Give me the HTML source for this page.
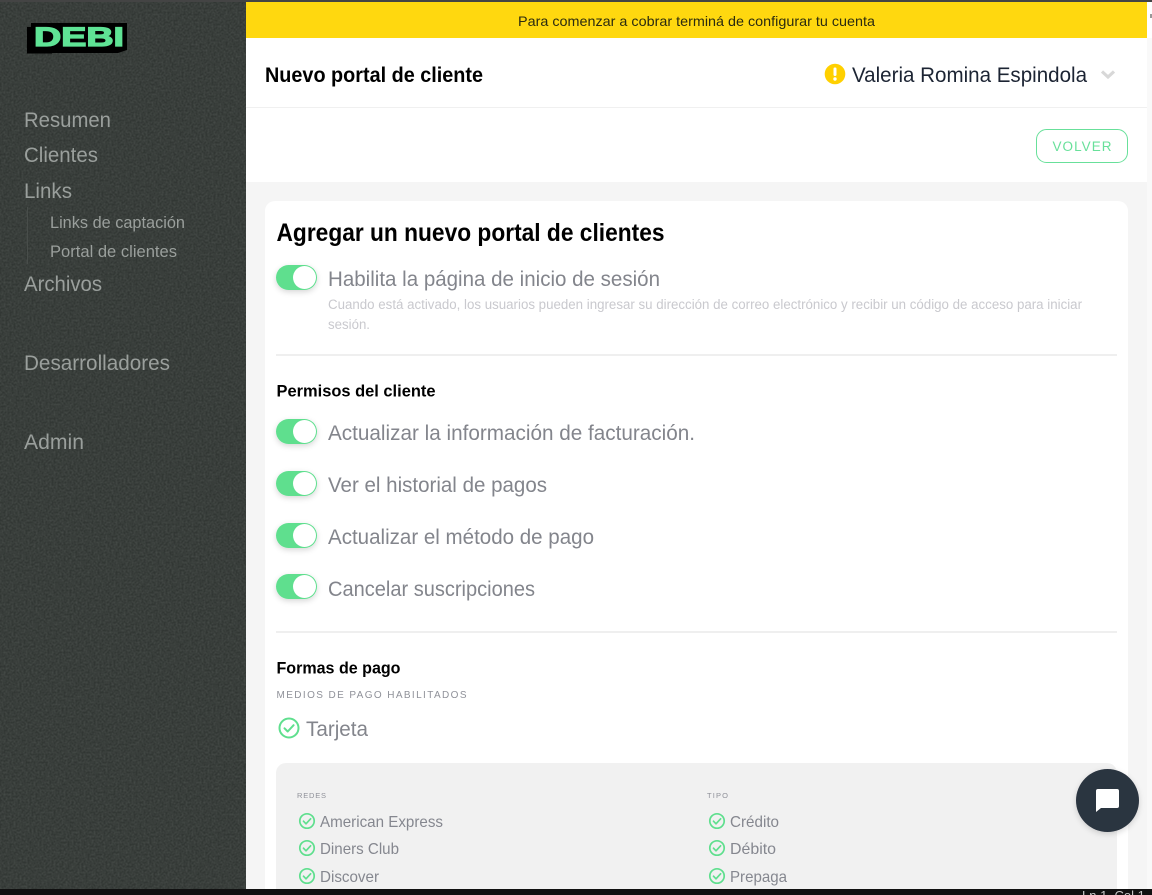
<!DOCTYPE html>
<html><head><meta charset="utf-8"><style>
html,body{margin:0;padding:0;width:1152px;height:895px;overflow:hidden;background:#fff}
svg{display:block}
text{font-family:"Liberation Sans",sans-serif}
.nav{fill:#9a9f9c;font-size:21px}
.sub{fill:#9a9f9c;font-size:16.5px}
.lab{fill:#83858c;font-size:21px}
.sm{fill:#85878f;font-size:16px}
.b{fill:#000;font-weight:bold}
</style></head><body>
<svg width="1152" height="895" viewBox="0 0 1152 895" xmlns="http://www.w3.org/2000/svg">
<defs>
<filter id="n" x="0" y="0" width="100%" height="100%"><feTurbulence type="fractalNoise" baseFrequency="0.5" numOctaves="2" seed="4"/><feColorMatrix values="0 0 0 0 0.27  0 0 0 0 0.30  0 0 0 0 0.28  0.8 0 0 0 -0.2"/></filter>
<filter id="s" x="-30%" y="-30%" width="160%" height="160%"><feDropShadow dx="0" dy="2" stdDeviation="3" flood-color="#000" flood-opacity=".16"/></filter>
<g id="t"><rect width="41" height="25" rx="12.5" fill="#5fdf8e"/><circle cx="28.5" cy="12.5" r="11.5" fill="#fff"/></g>
<g id="c" fill="none" stroke="#5fdf8e" stroke-width="1.7"><circle cx="0" cy="0" r="7.2"/><path d="M-3.5 .2 -1 2.8 3.6 -2.2" stroke-linecap="round" stroke-linejoin="round"/></g>
<g id="C" fill="none" stroke="#5fdf8e" stroke-width="2"><circle cx="0" cy="0" r="9.5"/><path d="M-4.5 .3 -1.3 3.5 4.6 -2.8" stroke-linecap="round" stroke-linejoin="round"/></g>
</defs>

<rect width="1152" height="895" fill="#fff"/>
<rect x="246" y="182" width="901" height="707" fill="#f5f5f5"/>
<rect x="1147" y="38" width="5" height="851" fill="#f9f9f9"/>
<rect x="1147" y="2" width="5" height="36" fill="#fff"/>
<rect x="1150" y="14" width="2" height="4" fill="#999"/>

<!-- sidebar -->
<rect x="0" y="0" width="246" height="889" fill="#313633"/>
<g opacity=".45"><rect x="0" y="0" width="246" height="889" filter="url(#n)"/></g>
<rect x="0" y="0" width="1152" height="2" fill="#444"/>
<path d="M31 23H127V50L118 53H52V53.500H27V27H31Z" fill="#000"/>
<text x="34" y="46" font-size="27" font-weight="bold" fill="#5fe395" stroke="#5fe395" stroke-width="1.3" textLength="90" lengthAdjust="spacingAndGlyphs">DEBI</text>
<text class="nav" x="24" y="127" textLength="87" lengthAdjust="spacingAndGlyphs">Resumen</text>
<text class="nav" x="24" y="162" textLength="74" lengthAdjust="spacingAndGlyphs">Clientes</text>
<text class="nav" x="24" y="198" textLength="48" lengthAdjust="spacingAndGlyphs">Links</text>
<rect x="27" y="207" width="1" height="57" fill="#484d4a"/>
<text class="sub" x="50" y="228" textLength="135" lengthAdjust="spacingAndGlyphs">Links de captación</text>
<text class="sub" x="50" y="257" textLength="127" lengthAdjust="spacingAndGlyphs">Portal de clientes</text>
<text class="nav" x="24" y="291" textLength="78" lengthAdjust="spacingAndGlyphs">Archivos</text>
<text class="nav" x="24" y="370" textLength="146" lengthAdjust="spacingAndGlyphs">Desarrolladores</text>
<text class="nav" x="24" y="449" textLength="60" lengthAdjust="spacingAndGlyphs">Admin</text>

<!-- banner -->
<rect x="246" y="2" width="901" height="36" fill="#ffd80f"/>
<text x="518" y="26" font-size="14" fill="#2b2b10" textLength="357" lengthAdjust="spacingAndGlyphs">Para comenzar a cobrar terminá de configurar tu cuenta</text>

<!-- header -->
<rect x="246" y="38" width="901" height="144" fill="#fff"/>
<rect x="246" y="107" width="901" height="1" fill="#f0f0f0"/>
<text x="265" y="82" font-size="21" class="b" textLength="218" lengthAdjust="spacingAndGlyphs">Nuevo portal de cliente</text>
<circle cx="835" cy="74" r="10.3" fill="#ffd000"/>
<rect x="833.5" y="67.5" width="3" height="8.5" rx="1.2" fill="#fff"/>
<circle cx="835" cy="79" r="1.7" fill="#fff"/>
<text x="852" y="82" font-size="21" fill="#1c2433" textLength="235" lengthAdjust="spacingAndGlyphs">Valeria Romina Espindola</text>
<path d="M1102 71.5 1108 77 1114 71.5" fill="none" stroke="#d8d8d8" stroke-width="3.2"/>
<rect x="1036.500" y="129.500" width="91" height="33" rx="10" fill="#fff" stroke="#68e09a" stroke-width="1"/>
<text x="1052.500" y="151" font-size="13.500" fill="#68e09a" textLength="59" lengthAdjust="spacing">VOLVER</text>

<!-- card -->
<rect x="265" y="201" width="863" height="700" rx="10" fill="#fff"/>
<text x="276.500" y="241" font-size="25" class="b" textLength="388" lengthAdjust="spacingAndGlyphs">Agregar un nuevo portal de clientes</text>
<use href="#t" x="276" y="265" filter="url(#s)"/>
<text class="lab" x="328" y="286" textLength="332" lengthAdjust="spacingAndGlyphs">Habilita la página de inicio de sesión</text>
<text x="328" y="309" font-size="13.500" fill="#c9c9ce" textLength="754" lengthAdjust="spacingAndGlyphs">Cuando está activado, los usuarios pueden ingresar su dirección de correo electrónico y recibir un código de acceso para iniciar</text>
<text x="328" y="329" font-size="13.500" fill="#c9c9ce" textLength="42" lengthAdjust="spacingAndGlyphs">sesión.</text>
<rect x="276" y="354" width="841" height="2" fill="#efefef"/>

<text x="276.500" y="396.500" font-size="17" class="b" textLength="159" lengthAdjust="spacingAndGlyphs">Permisos del cliente</text>
<use href="#t" x="276" y="419" filter="url(#s)"/>
<text class="lab" x="328" y="440" textLength="367" lengthAdjust="spacingAndGlyphs">Actualizar la información de facturación.</text>
<use href="#t" x="276" y="471" filter="url(#s)"/>
<text class="lab" x="328" y="492" textLength="219" lengthAdjust="spacingAndGlyphs">Ver el historial de pagos</text>
<use href="#t" x="276" y="523" filter="url(#s)"/>
<text class="lab" x="328" y="544" textLength="266" lengthAdjust="spacingAndGlyphs">Actualizar el método de pago</text>
<use href="#t" x="276" y="574" filter="url(#s)"/>
<text class="lab" x="328" y="596" textLength="207" lengthAdjust="spacingAndGlyphs">Cancelar suscripciones</text>
<rect x="276" y="631" width="841" height="2" fill="#efefef"/>

<text x="276.500" y="673.500" font-size="17" class="b" textLength="124" lengthAdjust="spacingAndGlyphs">Formas de pago</text>
<text x="276.500" y="698" font-size="10" fill="#8f9199" textLength="190" lengthAdjust="spacing">MEDIOS DE PAGO HABILITADOS</text>
<use href="#C" x="289" y="728"/>
<text class="lab" x="306" y="736" textLength="62" lengthAdjust="spacingAndGlyphs">Tarjeta</text>

<rect x="276" y="763" width="841" height="140" rx="10" fill="#f1f1f1"/>
<text x="297" y="798" font-size="7.500" fill="#8f9199" textLength="29" lengthAdjust="spacing">REDES</text>
<text x="707" y="798" font-size="7.500" fill="#8f9199" textLength="21" lengthAdjust="spacing">TIPO</text>
<use href="#c" x="307" y="821"/>
<text class="sm" x="320" y="827" textLength="123" lengthAdjust="spacingAndGlyphs">American Express</text>
<use href="#c" x="307" y="848"/>
<text class="sm" x="320" y="854" textLength="79" lengthAdjust="spacingAndGlyphs">Diners Club</text>
<use href="#c" x="307" y="876"/>
<text class="sm" x="320" y="882" textLength="59" lengthAdjust="spacingAndGlyphs">Discover</text>
<use href="#c" x="717" y="821"/>
<text class="sm" x="730" y="827" textLength="49" lengthAdjust="spacingAndGlyphs">Crédito</text>
<use href="#c" x="717" y="848"/>
<text class="sm" x="730" y="854" textLength="46" lengthAdjust="spacingAndGlyphs">Débito</text>
<use href="#c" x="717" y="876"/>
<text class="sm" x="730" y="882" textLength="57" lengthAdjust="spacingAndGlyphs">Prepaga</text>

<!-- chat -->
<circle cx="1107.500" cy="800.500" r="31.500" fill="#2b3441" filter="url(#s)"/>
<path d="M1098 789H1117Q1119 789 1119 791V806Q1119 808 1117 808H1101L1096 812V791Q1096 789 1098 789Z" fill="#fff"/>

<!-- bottom bar -->
<rect x="0" y="889" width="1152" height="6" fill="#111"/>
<text x="1082" y="900" font-size="13" fill="#c8c8c8">Ln 1, Col 1</text>
</svg>
</body></html>
